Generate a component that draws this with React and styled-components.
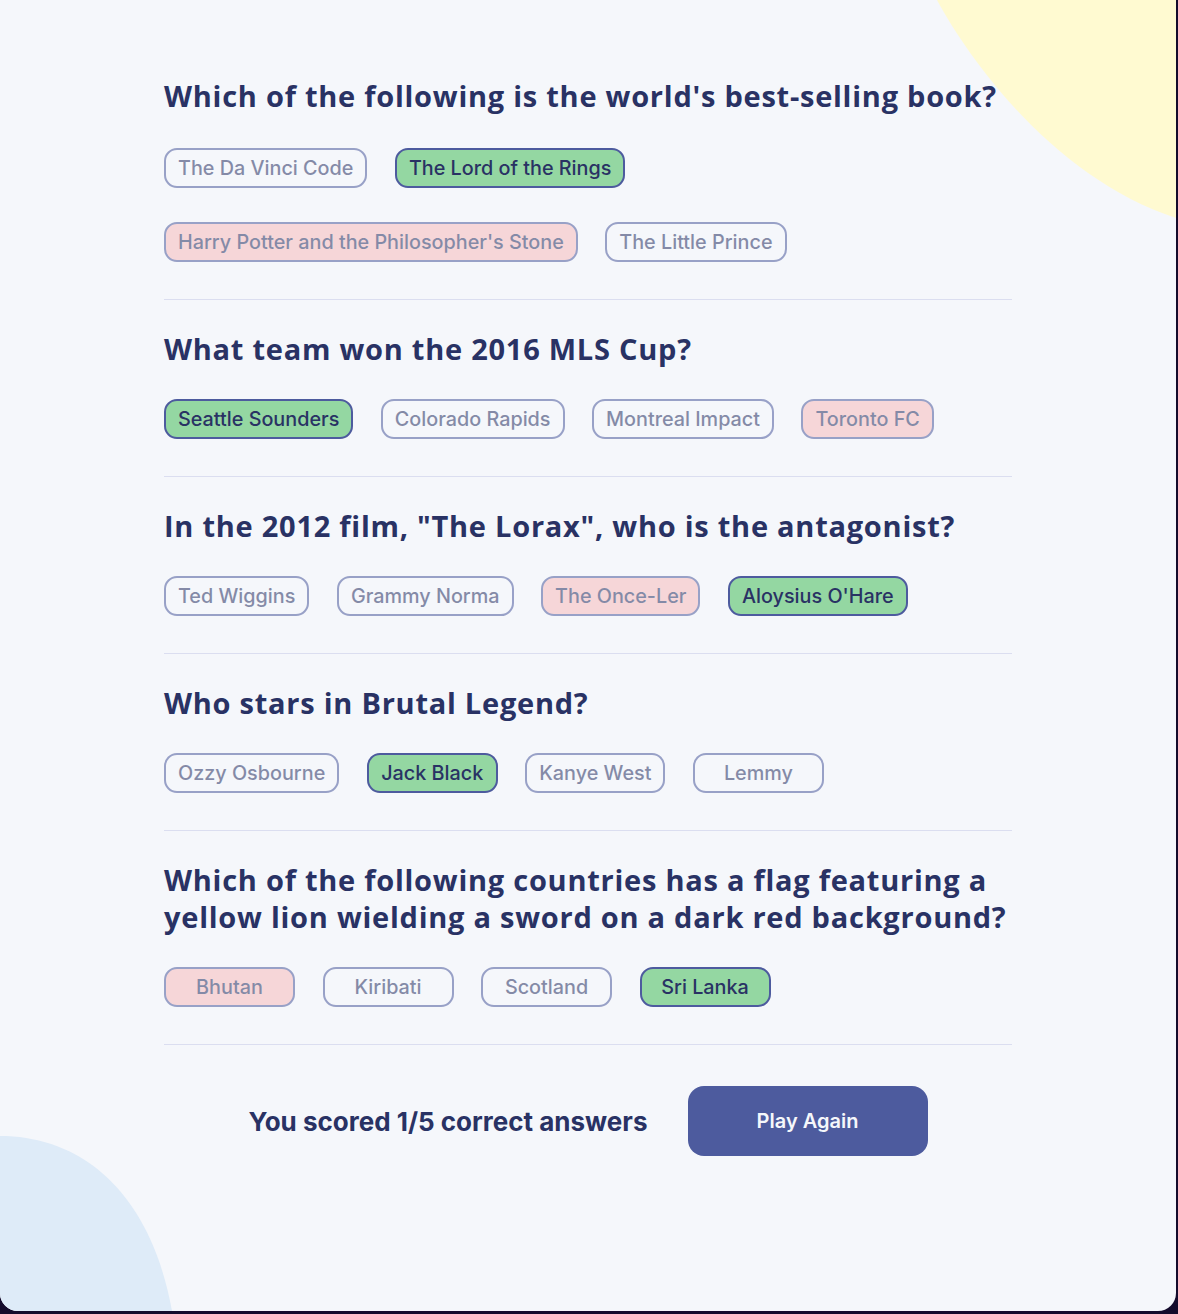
import React from 'react';
import styled, { createGlobalStyle } from 'styled-components';

const GlobalStyle = createGlobalStyle`
  body {
    margin: 0;
    background: #140b2c;
  }
  * { box-sizing: border-box; }
`;

const Page = styled.main`
  position: relative;
  width: 1176px;
  min-height: 1311px;
  background: #f5f7fb;
  border-radius: 0 0 18px 18px;
  overflow: hidden;
  padding: 77px 0 0;
`;

const Blobs = styled.svg`
  position: absolute;
  inset: 0;
  width: 1176px;
  height: 1311px;
  pointer-events: none;
`;

const Quiz = styled.div`
  position: relative;
  width: 848px;
  margin: 0 auto;
`;

const Section = styled.section`
  padding: ${(p) => (p.$first ? '0' : '30px')} 0 37px;
  border-bottom: 1px solid #dbdef0;
`;

const Question = styled.h2`
  margin: 0 0 ${(p) => (p.$first ? '34px' : '32px')};
  font-family: 'Open Sans', sans-serif;
  font-weight: 700;
  font-size: 29px;
  letter-spacing: 0.75px;
  line-height: 37px;
  color: #293264;
`;

const Answers = styled.div`
  display: flex;
  flex-wrap: wrap;
  column-gap: 27.5px;
  row-gap: 34px;
`;

const Answer = styled.button`
  min-width: 131px;
  height: 40px;
  padding: 0 12px;
  border-radius: 13px;
  border: 2px solid #4d5b9e;
  font-family: Inter, sans-serif;
  font-weight: 500;
  font-size: 19.8px;
  color: #293264;
  background: ${(p) =>
    p.$state === 'correct' ? '#94d7a2' : p.$state === 'wrong' ? '#f8bcbc' : 'transparent'};
  opacity: ${(p) => (p.$state === 'correct' ? 1 : 0.55)};
  cursor: default;
`;

const Footer = styled.div`
  display: flex;
  justify-content: center;
  align-items: center;
  gap: 40px;
  padding-top: 41px;
`;

const Score = styled.p`
  margin: 0;
  font-family: Inter, sans-serif;
  font-weight: 700;
  font-size: 26px;
  color: #293264;
`;

const PlayButton = styled.button`
  width: 240px;
  height: 70px;
  border: none;
  border-radius: 16px;
  background: #4d5b9e;
  color: #f5f7fb;
  font-family: Inter, sans-serif;
  font-weight: 600;
  font-size: 20px;
  cursor: pointer;
`;

const questions = [
  {
    q: "Which of the following is the world's best-selling book?",
    answers: ['The Da Vinci Code', 'The Lord of the Rings', "Harry Potter and the Philosopher's Stone", 'The Little Prince'],
    correct: 1,
    picked: 2,
  },
  {
    q: 'What team won the 2016 MLS Cup?',
    answers: ['Seattle Sounders', 'Colorado Rapids', 'Montreal Impact', 'Toronto FC'],
    correct: 0,
    picked: 3,
  },
  {
    q: 'In the 2012 film, "The Lorax", who is the antagonist?',
    answers: ['Ted Wiggins', 'Grammy Norma', 'The Once-Ler', "Aloysius O'Hare"],
    correct: 3,
    picked: 2,
  },
  {
    q: 'Who stars in Brutal Legend?',
    answers: ['Ozzy Osbourne', 'Jack Black', 'Kanye West', 'Lemmy'],
    correct: 1,
    picked: 1,
  },
  {
    q: 'Which of the following countries has a flag featuring a yellow lion wielding a sword on a dark red background?',
    answers: ['Bhutan', 'Kiribati', 'Scotland', 'Sri Lanka'],
    correct: 3,
    picked: 0,
  },
];

const stateOf = (item, i) => {
  if (i === item.correct) return 'correct';
  if (i === item.picked) return 'wrong';
  return 'idle';
};

export default function App() {
  return (
    <>
      <GlobalStyle />
      <Page>
        <Blobs viewBox="0 0 1176 1311">
          <path d="M937 0 C975 70 1060 180 1176 218 L1176 0 Z" fill="#fffad1" />
          <path d="M0 1136 C80 1136 150 1190 172 1311 L0 1311 Z" fill="#deebf8" />
        </Blobs>
        <Quiz>
          {questions.map((item, qi) => (
            <Section key={qi} $first={qi === 0}>
              <Question $first={qi === 0}>{item.q}</Question>
              <Answers>
                {item.answers.map((a, i) => (
                  <Answer key={a} $state={stateOf(item, i)}>
                    {a}
                  </Answer>
                ))}
              </Answers>
            </Section>
          ))}
          <Footer>
            <Score>You scored 1/5 correct answers</Score>
            <PlayButton>Play Again</PlayButton>
          </Footer>
        </Quiz>
      </Page>
    </>
  );
}
